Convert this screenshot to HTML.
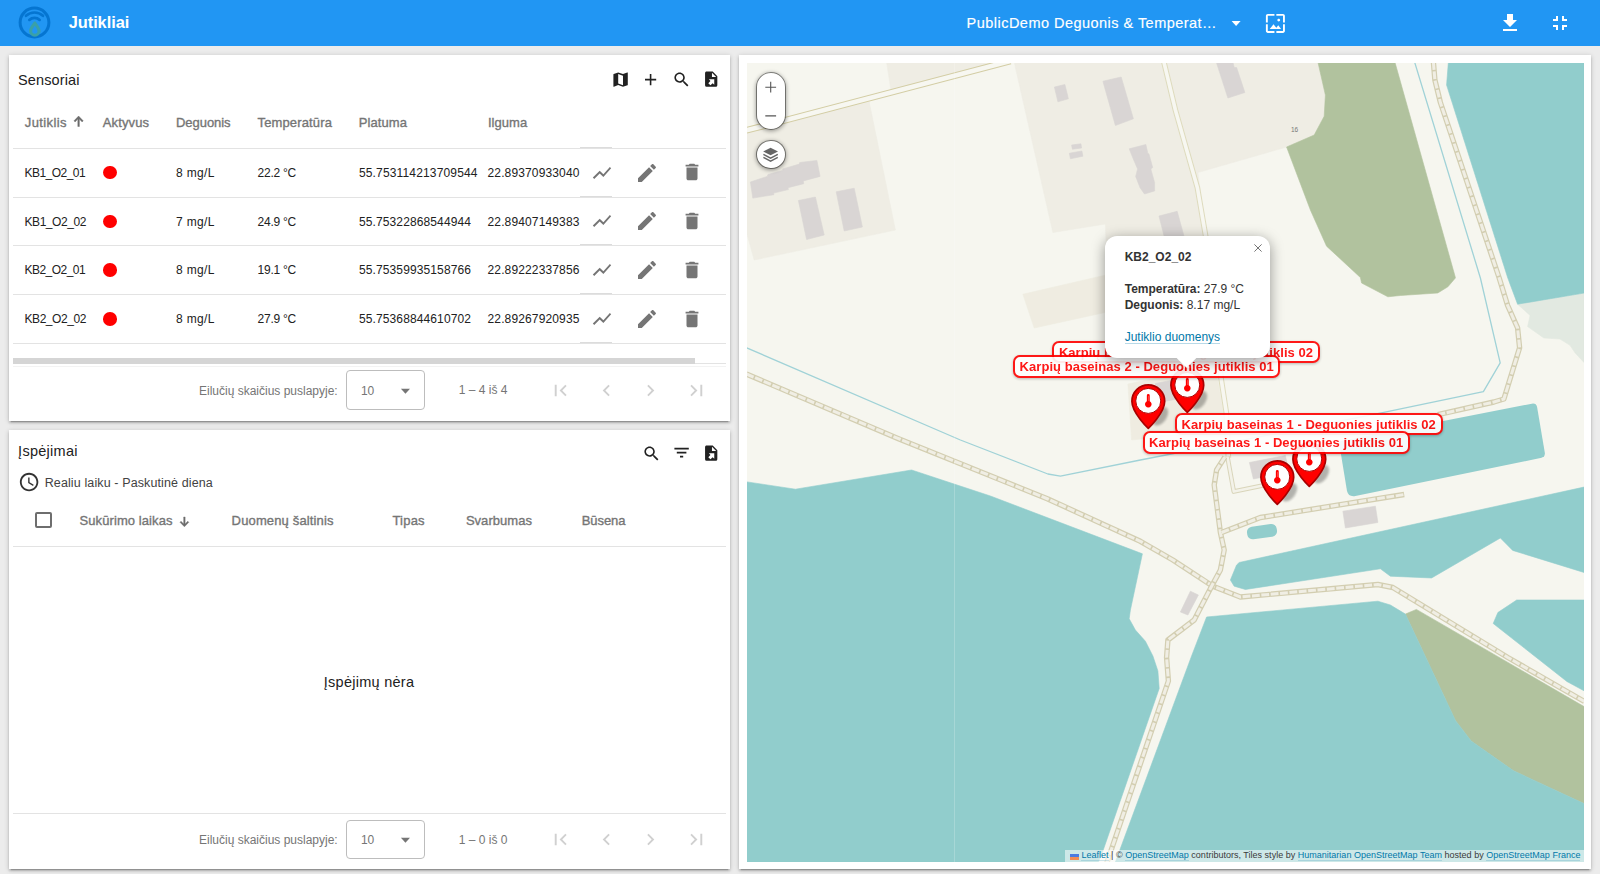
<!DOCTYPE html>
<html lang="lt"><head><meta charset="utf-8"><title>Jutikliai</title>
<style>
html,body{margin:0;padding:0}
body{width:1600px;height:874px;overflow:hidden;background:#ececec;position:relative;font-family:"Liberation Sans","DejaVu Sans",sans-serif;color:#212121}
.t{position:absolute;white-space:pre;line-height:1;margin:0;padding:0}
.abs{position:absolute}
h1.t,h2.t{font-weight:400}
header,main,section{display:block;margin:0;padding:0}
#hdr{position:absolute;left:0;top:0;width:1600px;height:46px;background:#2196f3}
.card{position:absolute;background:#fff;box-shadow:0 3px 1px -2px rgba(0,0,0,.2),0 2px 2px 0 rgba(0,0,0,.14),0 1px 5px 0 rgba(0,0,0,.2)}
.hl{position:absolute;height:1px;background:#e3e3e3}
.m{-webkit-text-stroke:.35px currentColor}
svg{position:absolute;overflow:visible}
.dot{position:absolute;width:13.6px;height:13.6px;border-radius:50%;background:#ff0000}
.sel{position:absolute;box-sizing:border-box;border:1px solid #bdbdbd;border-radius:4px}
.lbl{position:absolute;box-sizing:border-box;width:267.2px;height:22.4px;border:2px solid #ff0000;border-radius:7px;background:#fff;opacity:.9;box-shadow:0 1px 3px rgba(0,0,0,.28)}
.lbl .t{text-shadow:0 0 2px #fff}
.lk{color:#0078a8;border-bottom:1px solid rgba(0,120,168,.18)}
</style></head><body>

<header id="hdr">
<svg style="left:0;top:0" width="70" height="46" viewBox="0 0 70 46"><g fill="none" stroke="#0575d1" stroke-linecap="round"><circle cx="34.5" cy="22.5" r="14.4" stroke-width="3"/><path d="M26 15.8 A12.6 12.6 0 0 1 43 15.8" stroke-width="2.7"/><path d="M29.3 19.9 A7.6 7.6 0 0 1 39.7 19.9" stroke-width="2.7"/></g><path d="M34.8 23 C33.4 25.4 30.6 28 30.6 31 a4.2 4.2 0 0 0 8.4 0 C39 28 36.2 25.4 34.8 23 Z" fill="none" stroke="#3aa0a8" stroke-width="3.1" stroke-linejoin="round"/></svg>
<h1 class="t" style="left:68.75px;top:14px;font-size:16.4px;letter-spacing:-0.068px;color:#fff;font-weight:700;">Jutikliai</h1>
<span class="t" style="left:966.60px;top:16px;font-size:14.5px;letter-spacing:0.471px;color:#fff;-webkit-text-stroke:.15px #fff;">PublicDemo Deguonis &amp; Temperat…</span>
<svg style="left:0;top:0" width="1600" height="46"><path fill="#fff" d="M1231.6 21h9l-4.5 4.9z"/></svg>
<svg style="left:1264.00px;top:12.20px" width="22.8" height="22.8" viewBox="0 0 24 24"><path fill="#fff" d="M4 4h7V2H4c-1.1 0-2 .9-2 2v7h2V4zm6 9l-4 5h12l-3-4-2.03 2.71L10 13zm7-4.5c0-.83-.67-1.5-1.5-1.5S14 7.67 14 8.5s.67 1.5 1.5 1.5S17 9.33 17 8.5zM20 2h-7v2h7v7h2V4c0-1.1-.9-2-2-2zm0 18h-7v2h7c1.1 0 2-.9 2-2v-7h-2v7zM4 13H2v7c0 1.1.9 2 2 2h7v-2H4v-7z"/></svg>
<svg style="left:1497.50px;top:10.90px" width="24" height="24" viewBox="0 0 24 24"><path fill="#fff" d="M19 9h-4V3H9v6H5l7 7 7-7zM5 18v2h14v-2H5z"/></svg>
<svg style="left:1548.10px;top:11.10px" width="24" height="24" viewBox="0 0 24 24"><path fill="#fff" d="M5 16h3v3h2v-5H5v2zm3-8H5v2h5V5H8v3zm6 11h2v-3h3v-2h-5v5zm2-11V5h-2v5h5V8h-3z"/></svg>
</header>
<main>
<section aria-label="Sensoriai">
<div class="card" style="left:9.2px;top:55.4px;width:720.8px;height:365.8px"></div>
<h2 class="t" style="left:18.10px;top:73px;font-size:14.5px;letter-spacing:0.106px;color:#212121;">Sensoriai</h2>
<svg style="left:611.20px;top:70.10px" width="19.2" height="19.2" viewBox="0 0 24 24"><path fill="#212121" d="M20.5 3l-.16.03L15 5.1 9 3 3.36 4.9c-.21.07-.36.25-.36.48V20.5c0 .28.22.5.5.5l.16-.03L9 18.9l6 2.1 5.64-1.9c.21-.07.36-.25.36-.48V3.5c0-.28-.22-.5-.5-.5zM15 19l-6-2.11V5l6 2.11V19z"/></svg>
<svg style="left:641.10px;top:69.80px" width="19.2" height="19.2" viewBox="0 0 24 24"><path fill="#212121" d="M19 13h-6v6h-2v-6H5v-2h6V5h2v6h6v2z"/></svg>
<svg style="left:671.50px;top:70.10px" width="19.2" height="19.2" viewBox="0 0 24 24"><path fill="#212121" d="M15.5 14h-.79l-.28-.27C15.41 12.59 16 11.11 16 9.5 16 5.91 13.09 3 9.5 3S3 5.91 3 9.5 5.91 16 9.5 16c1.61 0 3.09-.59 4.23-1.57l.27.28v.79l5 4.99L20.49 19l-4.99-5zm-6 0C7.01 14 5 11.99 5 9.5S7.01 5 9.5 5 14 7.01 14 9.5 11.99 14 9.5 14z"/></svg>
<svg style="left:701.80px;top:70.00px" width="18.4" height="18.4" viewBox="0 0 24 24"><path fill="#212121" d="M6,2C4.89,2 4,2.89 4,4V20A2,2 0 0,0 6,22H18A2,2 0 0,0 20,20V8L14,2H6M13,3.5L18.5,9H13V3.5M8.93,12.22H16V19.29L13.88,17.17L11.05,20L8.22,17.17L11.05,14.35L8.93,12.22Z"/></svg>
<span class="t m" style="left:24.75px;top:116px;font-size:13px;letter-spacing:0.391px;color:#757575;">Jutiklis</span>
<span class="t m" style="left:102.75px;top:116px;font-size:13px;letter-spacing:0.122px;color:#757575;">Aktyvus</span>
<span class="t m" style="left:176.00px;top:116px;font-size:13px;letter-spacing:-0.048px;color:#757575;">Deguonis</span>
<span class="t m" style="left:257.50px;top:116px;font-size:13px;letter-spacing:0.142px;color:#757575;">Temperatūra</span>
<span class="t m" style="left:358.75px;top:116px;font-size:13px;letter-spacing:0.074px;color:#757575;">Platuma</span>
<span class="t m" style="left:487.90px;top:116px;font-size:13px;letter-spacing:0.064px;color:#757575;">Ilguma</span>
<svg style="left:73.7px;top:116.3px" width="9.2" height="10.5" viewBox="240 -760 480 520" preserveAspectRatio="none"><path fill="#6c6c6c" stroke="#6c6c6c" stroke-width="22" d="M440-240v-368L296-464l-56-56 240-240 240 240-56 56-144-144v368h-80Z"/></svg>
<div class="hl" style="left:13px;top:147.70px;width:712.6px"></div>
<div class="hl" style="left:580px;top:146.90px;width:32px;background:#dcdcdc"></div>
<div class="hl" style="left:13px;top:196.50px;width:712.6px"></div>
<div class="hl" style="left:580px;top:195.70px;width:32px;background:#dcdcdc"></div>
<div class="hl" style="left:13px;top:245.20px;width:712.6px"></div>
<div class="hl" style="left:580px;top:244.40px;width:32px;background:#dcdcdc"></div>
<div class="hl" style="left:13px;top:294.00px;width:712.6px"></div>
<div class="hl" style="left:580px;top:293.20px;width:32px;background:#dcdcdc"></div>
<div class="hl" style="left:13px;top:342.80px;width:712.6px"></div>
<div class="hl" style="left:580px;top:342.00px;width:32px;background:#dcdcdc"></div>
<span class="t" style="left:24.50px;top:167px;font-size:12px;letter-spacing:-0.536px;color:#212121;">KB1_O2_01</span>
<div class="dot" style="left:103.20px;top:165.90px"></div>
<span class="t" style="left:176.00px;top:167px;font-size:12px;letter-spacing:0.343px;color:#212121;">8 mg/L</span>
<span class="t" style="left:257.50px;top:167px;font-size:12px;letter-spacing:-0.234px;color:#212121;">22.2 °C</span>
<span class="t" style="left:358.90px;top:167px;font-size:12px;letter-spacing:0.158px;color:#212121;">55.753114213709544</span>
<span class="t" style="left:487.50px;top:167px;font-size:12px;letter-spacing:0.139px;color:#212121;">22.89370933040</span>
<svg style="left:590.90px;top:161.50px" width="22" height="22" viewBox="0 0 24 24"><path fill="#757575" d="M3.5 18.49l6-6.01 4 4L22 6.92l-1.41-1.41-7.09 7.97-4-4L2 16.99z"/></svg>
<svg style="left:634.75px;top:160.70px" width="24" height="24" viewBox="0 0 24 24"><path fill="#757575" d="M3 17.25V21h3.75L17.81 9.94l-3.75-3.75L3 17.25zM20.71 7.04c.39-.39.39-1.02 0-1.41l-2.34-2.34c-.39-.39-1.02-.39-1.41 0l-1.83 1.83 3.75 3.75 1.83-1.83z"/></svg>
<svg style="left:680.80px;top:161.40px" width="22" height="22" viewBox="0 0 24 24"><path fill="#757575" d="M6 19c0 1.1.9 2 2 2h8c1.1 0 2-.9 2-2V7H6v12zM19 4h-3.5l-1-1h-5l-1 1H5v2h14V4z"/></svg>
<span class="t" style="left:24.50px;top:216px;font-size:12px;letter-spacing:-0.436px;color:#212121;">KB1_O2_02</span>
<div class="dot" style="left:103.20px;top:214.65px"></div>
<span class="t" style="left:176.00px;top:216px;font-size:12px;letter-spacing:0.343px;color:#212121;">7 mg/L</span>
<span class="t" style="left:257.50px;top:216px;font-size:12px;letter-spacing:-0.234px;color:#212121;">24.9 °C</span>
<span class="t" style="left:358.90px;top:216px;font-size:12px;letter-spacing:0.123px;color:#212121;">55.75322868544944</span>
<span class="t" style="left:487.50px;top:216px;font-size:12px;letter-spacing:0.139px;color:#212121;">22.89407149383</span>
<svg style="left:590.90px;top:210.25px" width="22" height="22" viewBox="0 0 24 24"><path fill="#757575" d="M3.5 18.49l6-6.01 4 4L22 6.92l-1.41-1.41-7.09 7.97-4-4L2 16.99z"/></svg>
<svg style="left:634.75px;top:209.45px" width="24" height="24" viewBox="0 0 24 24"><path fill="#757575" d="M3 17.25V21h3.75L17.81 9.94l-3.75-3.75L3 17.25zM20.71 7.04c.39-.39.39-1.02 0-1.41l-2.34-2.34c-.39-.39-1.02-.39-1.41 0l-1.83 1.83 3.75 3.75 1.83-1.83z"/></svg>
<svg style="left:680.80px;top:210.15px" width="22" height="22" viewBox="0 0 24 24"><path fill="#757575" d="M6 19c0 1.1.9 2 2 2h8c1.1 0 2-.9 2-2V7H6v12zM19 4h-3.5l-1-1h-5l-1 1H5v2h14V4z"/></svg>
<span class="t" style="left:24.50px;top:264px;font-size:12px;letter-spacing:-0.536px;color:#212121;">KB2_O2_01</span>
<div class="dot" style="left:103.20px;top:263.40px"></div>
<span class="t" style="left:176.00px;top:264px;font-size:12px;letter-spacing:0.343px;color:#212121;">8 mg/L</span>
<span class="t" style="left:257.50px;top:264px;font-size:12px;letter-spacing:-0.234px;color:#212121;">19.1 °C</span>
<span class="t" style="left:358.90px;top:264px;font-size:12px;letter-spacing:0.123px;color:#212121;">55.75359935158766</span>
<span class="t" style="left:487.50px;top:264px;font-size:12px;letter-spacing:0.139px;color:#212121;">22.89222337856</span>
<svg style="left:590.90px;top:259.00px" width="22" height="22" viewBox="0 0 24 24"><path fill="#757575" d="M3.5 18.49l6-6.01 4 4L22 6.92l-1.41-1.41-7.09 7.97-4-4L2 16.99z"/></svg>
<svg style="left:634.75px;top:258.20px" width="24" height="24" viewBox="0 0 24 24"><path fill="#757575" d="M3 17.25V21h3.75L17.81 9.94l-3.75-3.75L3 17.25zM20.71 7.04c.39-.39.39-1.02 0-1.41l-2.34-2.34c-.39-.39-1.02-.39-1.41 0l-1.83 1.83 3.75 3.75 1.83-1.83z"/></svg>
<svg style="left:680.80px;top:258.90px" width="22" height="22" viewBox="0 0 24 24"><path fill="#757575" d="M6 19c0 1.1.9 2 2 2h8c1.1 0 2-.9 2-2V7H6v12zM19 4h-3.5l-1-1h-5l-1 1H5v2h14V4z"/></svg>
<span class="t" style="left:24.50px;top:313px;font-size:12px;letter-spacing:-0.436px;color:#212121;">KB2_O2_02</span>
<div class="dot" style="left:103.20px;top:312.15px"></div>
<span class="t" style="left:176.00px;top:313px;font-size:12px;letter-spacing:0.343px;color:#212121;">8 mg/L</span>
<span class="t" style="left:257.50px;top:313px;font-size:12px;letter-spacing:-0.234px;color:#212121;">27.9 °C</span>
<span class="t" style="left:358.90px;top:313px;font-size:12px;letter-spacing:0.123px;color:#212121;">55.75368844610702</span>
<span class="t" style="left:487.50px;top:313px;font-size:12px;letter-spacing:0.139px;color:#212121;">22.89267920935</span>
<svg style="left:590.90px;top:307.75px" width="22" height="22" viewBox="0 0 24 24"><path fill="#757575" d="M3.5 18.49l6-6.01 4 4L22 6.92l-1.41-1.41-7.09 7.97-4-4L2 16.99z"/></svg>
<svg style="left:634.75px;top:306.95px" width="24" height="24" viewBox="0 0 24 24"><path fill="#757575" d="M3 17.25V21h3.75L17.81 9.94l-3.75-3.75L3 17.25zM20.71 7.04c.39-.39.39-1.02 0-1.41l-2.34-2.34c-.39-.39-1.02-.39-1.41 0l-1.83 1.83 3.75 3.75 1.83-1.83z"/></svg>
<svg style="left:680.80px;top:307.65px" width="22" height="22" viewBox="0 0 24 24"><path fill="#757575" d="M6 19c0 1.1.9 2 2 2h8c1.1 0 2-.9 2-2V7H6v12zM19 4h-3.5l-1-1h-5l-1 1H5v2h14V4z"/></svg>
<div class="abs" style="left:13px;top:358px;width:682px;height:6px;background:#d5d5d5"></div>
<div class="hl" style="left:695px;top:363.4px;width:31px"></div>
<div class="hl" style="left:13px;top:366px;width:713px;background:#f3f3f3"></div>
<span class="t" style="left:199.00px;top:385px;font-size:12px;letter-spacing:-0.001px;color:#757575;">Eilučių skaičius puslapyje:</span>
<div class="sel" style="left:345.8px;top:370.4px;width:78.9px;height:39.2px"></div>
<span class="t" style="left:360.90px;top:385px;font-size:12px;color:#757575;">10</span>
<svg style="left:400px;top:385.00px" width="12" height="10"><path fill="#757575" d="M.9 3.7h9.1l-4.55 5z"/></svg>
<span class="t" style="left:458.75px;top:384px;font-size:12px;letter-spacing:0.005px;color:#757575;">1 – 4 iš 4</span>
<svg style="left:549.40px;top:378.90px" width="23" height="23" viewBox="0 0 24 24"><path fill="#d0d0d0" d="M18.41 16.59L13.82 12l4.59-4.59L17 6l-6 6 6 6zM6 6h2v12H6z"/></svg>
<svg style="left:594.50px;top:378.90px" width="23" height="23" viewBox="0 0 24 24"><path fill="#d0d0d0" d="M15.41 7.41L14 6l-6 6 6 6 1.41-1.41L10.83 12z"/></svg>
<svg style="left:639.00px;top:378.90px" width="23" height="23" viewBox="0 0 24 24"><path fill="#d0d0d0" d="M10 6L8.59 7.41 13.17 12l-4.58 4.59L10 18l6-6z"/></svg>
<svg style="left:684.90px;top:378.90px" width="23" height="23" viewBox="0 0 24 24"><path fill="#d0d0d0" d="M5.59 7.41L10.18 12l-4.59 4.59L7 18l6-6-6-6zM16 6h2v12h-2z"/></svg>
</section>
<section aria-label="Įspėjimai">
<div class="card" style="left:9.2px;top:429.7px;width:720.8px;height:439.6px"></div>
<h2 class="t" style="left:18.10px;top:444px;font-size:14.5px;letter-spacing:0.273px;color:#212121;">Įspėjimai</h2>
<svg style="left:641.80px;top:443.80px" width="19.2" height="19.2" viewBox="0 0 24 24"><path fill="#212121" d="M15.5 14h-.79l-.28-.27C15.41 12.59 16 11.11 16 9.5 16 5.91 13.09 3 9.5 3S3 5.91 3 9.5 5.91 16 9.5 16c1.61 0 3.09-.59 4.23-1.57l.27.28v.79l5 4.99L20.49 19l-4.99-5zm-6 0C7.01 14 5 11.99 5 9.5S7.01 5 9.5 5 14 7.01 14 9.5 11.99 14 9.5 14z"/></svg>
<svg style="left:671.60px;top:443.40px" width="19.2" height="19.2" viewBox="0 0 24 24"><path fill="#212121" d="M10 18h4v-2h-4v2zM3 6v2h18V6H3zm3 7h12v-2H6v2z"/></svg>
<svg style="left:701.80px;top:444.00px" width="18.4" height="18.4" viewBox="0 0 24 24"><path fill="#212121" d="M6,2C4.89,2 4,2.89 4,4V20A2,2 0 0,0 6,22H18A2,2 0 0,0 20,20V8L14,2H6M13,3.5L18.5,9H13V3.5M8.93,12.22H16V19.29L13.88,17.17L11.05,20L8.22,17.17L11.05,14.35L8.93,12.22Z"/></svg>
<svg style="left:17.85px;top:471.45px" width="22.2" height="22.2" viewBox="0 0 24 24"><path fill="#333" d="M11.99 2C6.47 2 2 6.48 2 12s4.47 10 9.99 10C17.52 22 22 17.52 22 12S17.52 2 11.99 2zM12 20c-4.42 0-8-3.58-8-8s3.58-8 8-8 8 3.58 8 8-3.58 8-8 8zm.5-13H11v6l5.25 3.15.75-1.23-4.5-2.67z"/></svg>
<span class="t" style="left:44.70px;top:477px;font-size:12.5px;letter-spacing:0.118px;color:#424242;">Realiu laiku - Paskutinė diena</span>
<div class="abs" style="left:35.3px;top:512.3px;width:16.6px;height:16.1px;box-sizing:border-box;border:2px solid #6e6e6e;border-radius:2px"></div>
<span class="t m" style="left:79.50px;top:514px;font-size:13px;letter-spacing:0.088px;color:#757575;">Sukūrimo laikas</span>
<span class="t m" style="left:231.60px;top:514px;font-size:13px;letter-spacing:0.145px;color:#757575;">Duomenų šaltinis</span>
<span class="t m" style="left:392.40px;top:514px;font-size:13px;letter-spacing:0.222px;color:#757575;">Tipas</span>
<span class="t m" style="left:465.90px;top:514px;font-size:13px;letter-spacing:0.031px;color:#757575;">Svarbumas</span>
<span class="t m" style="left:581.80px;top:514px;font-size:13px;letter-spacing:-0.099px;color:#757575;">Būsena</span>
<svg style="left:180.2px;top:516.6px" width="8.8" height="9.8" viewBox="240 -760 480 520" preserveAspectRatio="none"><path fill="#6c6c6c" stroke="#6c6c6c" stroke-width="22" transform="rotate(180 480 -500)" d="M440-240v-368L296-464l-56-56 240-240 240 240-56 56-144-144v368h-80Z"/></svg>
<div class="hl" style="left:13px;top:545.9px;width:712.6px"></div>
<span class="t" style="left:323.80px;top:675px;font-size:14.5px;letter-spacing:0.263px;color:#212121;">Įspėjimų nėra</span>
<div class="hl" style="left:13px;top:812.5px;width:712.6px"></div>
<span class="t" style="left:199.00px;top:834px;font-size:12px;letter-spacing:-0.001px;color:#757575;">Eilučių skaičius puslapyje:</span>
<div class="sel" style="left:345.8px;top:820.1px;width:78.9px;height:38.6px"></div>
<span class="t" style="left:360.90px;top:834px;font-size:12px;color:#757575;">10</span>
<svg style="left:400px;top:834.40px" width="12" height="10"><path fill="#757575" d="M.9 3.7h9.1l-4.55 5z"/></svg>
<span class="t" style="left:458.75px;top:834px;font-size:12px;letter-spacing:0.005px;color:#757575;">1 – 0 iš 0</span>
<svg style="left:549.40px;top:828.30px" width="23" height="23" viewBox="0 0 24 24"><path fill="#d0d0d0" d="M18.41 16.59L13.82 12l4.59-4.59L17 6l-6 6 6 6zM6 6h2v12H6z"/></svg>
<svg style="left:594.50px;top:828.30px" width="23" height="23" viewBox="0 0 24 24"><path fill="#d0d0d0" d="M15.41 7.41L14 6l-6 6 6 6 1.41-1.41L10.83 12z"/></svg>
<svg style="left:639.00px;top:828.30px" width="23" height="23" viewBox="0 0 24 24"><path fill="#d0d0d0" d="M10 6L8.59 7.41 13.17 12l-4.58 4.59L10 18l6-6z"/></svg>
<svg style="left:684.90px;top:828.30px" width="23" height="23" viewBox="0 0 24 24"><path fill="#d0d0d0" d="M5.59 7.41L10.18 12l-4.59 4.59L7 18l6-6-6-6zM16 6h2v12h-2z"/></svg>
</section>
<section aria-label="Žemėlapis">
<div class="card" style="left:738.9px;top:55.4px;width:852.6px;height:813.9px"></div>
<div id="map" style="position:absolute;left:746.6px;top:63px;width:837.2px;height:798.8px;overflow:hidden;background:#f6f6ef">
<svg style="left:0;top:0" width="837.2" height="798.8" viewBox="746.6 63 837.2 798.8"><polygon fill="#efede4" stroke="#efede4" stroke-width=".6" points="746.0,133.0 868.8,102.0 895.0,230.0 753.8,260.0 746.0,232.0"/>
<polygon fill="#efede4" stroke="#efede4" stroke-width=".6" points="886.2,62.0 996.0,62.0 890.5,89.8"/>
<polygon fill="#efede4" stroke="#efede4" stroke-width=".6" points="1013.8,62.0 1317.5,62.0 1325.0,95.0 1323.8,116.2 1313.8,135.0 1286.2,147.0 1197.5,172.5 1205.0,235.0 1215.0,300.0 1108.0,300.0 1105.0,224.0 1052.5,232.5"/>
<polygon fill="#efece1" stroke="#efece1" stroke-width=".6" points="1022.5,294.2 1110.0,274.0 1125.0,308.0 1033.8,328.0"/>
<polygon fill="#efece1" stroke="#efece1" stroke-width=".6" points="1127.5,384.0 1215.0,366.0 1226.0,430.0 1131.2,440.0"/>
<polygon fill="#b1c29e" stroke="#b1c29e" stroke-width=".6" points="1317.5,62.0 1394.5,62.0 1455.0,277.5 1455.0,278.0 1447.5,286.8 1437.4,293.0 1400.0,295.5 1387.5,296.8 1361.2,283.0 1360.0,277.5 1326.2,246.2 1310.0,210.0 1286.2,147.0 1313.8,135.0 1323.8,116.2 1325.0,95.0"/>
<polygon fill="#b1c29e" stroke="#b1c29e" stroke-width=".6" points="1405.0,614.1 1416.0,609.4 1584.0,706.8 1584.0,803.8 1513.2,770.8 1470.8,741.0 1455.2,720.7"/>
<polygon fill="#e2e9e1" stroke="#e2e9e1" stroke-width=".6" points="1517.2,304.2 1584.0,293.0 1584.0,362.8 1574.6,352.8 1569.6,345.3 1559.6,339.1 1543.4,337.9 1527.2,326.6 1529.7,315.4"/>
<polygon fill="#91cdcc" stroke="#91cdcc" stroke-width=".6" points="1448.0,62.0 1584.0,62.0 1584.0,293.0 1517.2,304.2 1507.4,278.0 1446.2,85.0"/>
<polygon fill="#91cdcc" stroke="#91cdcc" stroke-width=".6" points="746.0,481.8 795.0,489.2 911.2,470.0 990.0,496.0 1142.0,553.8 1130.0,610.0 1128.8,618.8 1135.0,630.0 1145.0,641.2 1152.5,656.0 1157.5,671.0 1158.8,688.5 1102.5,851.0 1098.0,862.0 746.0,862.0"/>
<path fill="#91cdcc" d="M1338.5 441.5 L1531.5 403.7 Q1535.8 403 1536.7 407 L1544.4 452.5 Q1545 456.8 1541.2 457.8 L1355 496 Q1348 497.2 1346.6 491 Z"/>
<polygon fill="#91cdcc" stroke="#91cdcc" stroke-width=".6" points="1584.0,487.0 1238.8,562.5 1236.2,565.0 1230.0,580.0 1233.8,586.2 1245.0,589.5 1380.0,568.8 1390.0,576.2 1431.2,578.0 1500.0,538.0 1512.3,550.4 1584.0,572.6"/>
<polygon fill="#91cdcc" stroke="#91cdcc" stroke-width=".6" points="1206.2,617.0 1377.5,601.2 1390.0,605.0 1405.0,614.1 1455.2,720.7 1470.8,741.0 1513.2,770.8 1584.0,803.8 1584.0,862.0 1115.0,862.0 1191.2,656.0"/>
<polygon fill="#91cdcc" stroke="#91cdcc" stroke-width=".6" points="1584.0,600.0 1516.3,600.0 1497.5,612.5 1492.8,623.5 1566.5,681.5 1584.0,691.0"/>
<rect x="1246.6" y="525.2" width="30" height="12.8" rx="5.5" fill="#91cdcc" transform="rotate(-8 1262 531.5)"/>
<polygon fill="#d9d5d4" stroke="#d9d5d4" stroke-width=".6" points="750.0,182.0 766.8,176.4 767.6,174.5 782.0,170.5 782.5,168.9 798.9,164.1 799.3,162.5 816.5,160.4 819.7,176.4 802.9,180.9 803.3,183.7 787.6,187.7 788.0,189.6 773.2,193.1 773.5,194.7 752.4,198.1"/>
<polygon fill="#d9d5d4" stroke="#d9d5d4" stroke-width=".6" points="798.0,200.5 815.0,197.0 823.8,235.0 806.2,239.5"/>
<polygon fill="#d9d5d4" stroke="#d9d5d4" stroke-width=".6" points="835.8,191.8 853.8,188.2 862.0,227.0 843.8,231.0"/>
<polygon fill="#d9d5d4" stroke="#d9d5d4" stroke-width=".6" points="1054.0,87.0 1064.5,84.5 1068.0,98.8 1057.5,101.8"/>
<polygon fill="#d9d5d4" stroke="#d9d5d4" stroke-width=".6" points="1102.5,81.2 1120.8,77.0 1133.0,118.8 1115.0,125.5"/>
<polygon fill="#d9d5d4" stroke="#d9d5d4" stroke-width=".6" points="1071.2,145.0 1080.5,143.8 1081.2,148.0 1072.0,149.2"/>
<polygon fill="#d9d5d4" stroke="#d9d5d4" stroke-width=".6" points="1069.0,153.2 1081.5,151.0 1082.5,156.2 1070.0,158.8"/>
<polygon fill="#d9d5d4" stroke="#d9d5d4" stroke-width=".6" points="1128.8,148.8 1145.5,144.5 1147.5,153.8 1148.5,153.8 1152.3,167.6 1150.4,168.9 1154.2,182.7 1154.2,190.9 1144.1,194.0 1139.7,187.8 1135.3,176.4 1137.2,168.9 1132.8,158.8"/>
<polygon fill="#d9d5d4" stroke="#d9d5d4" stroke-width=".6" points="1216.2,62.0 1232.5,62.0 1233.8,67.5 1236.2,67.5 1244.5,92.5 1227.5,98.0 1216.2,63.0"/>
<polygon fill="#d9d5d4" stroke="#d9d5d4" stroke-width=".6" points="1158.6,216.0 1176.8,211.3 1186.0,245.0 1166.0,245.0"/>
<polygon fill="#d9d5d4" stroke="#d9d5d4" stroke-width=".6" points="1342.5,511.2 1375.0,506.2 1377.5,522.5 1345.0,528.0"/>
<polygon fill="#d9d5d4" stroke="#d9d5d4" stroke-width=".6" points="1249.0,462.5 1285.0,455.5 1288.5,472.0 1253.0,479.0"/>
<polygon fill="#d9d5d4" stroke="#d9d5d4" stroke-width=".6" points="1190.0,591.2 1198.0,595.0 1187.5,615.0 1180.0,612.0"/>
<polygon fill="#d9d5d4" stroke="#d9d5d4" stroke-width=".6" points="1155.0,383.5 1178.0,379.0 1182.0,398.0 1159.0,402.5"/>
<path d="M1414.2 62.0 L1480.0 278.0 L1499.8 362.8 L1483.0 391.6 L1375.0 414.2 L1140.0 460.0 L1060.0 476.2 L1047.5 474.0 L960.0 440.0 L746.0 347.7" fill="none" stroke="#a0d2d7" stroke-width="1.3" stroke-linejoin="round"/>
<path d="M746.0 130.4 L1010.0 61.0" fill="none" stroke="#d3cda4" stroke-width="6.6" stroke-linejoin="round"/><path d="M746.0 130.4 L1010.0 61.0" fill="none" stroke="#f7f7f1" stroke-width="4.6" stroke-linejoin="round"/>
<path d="M1163.5 62.0 L1175.0 110.0 L1186.3 150.0 L1197.0 187.8 L1205.2 235.6 L1213.0 300.0 L1220.6 377.8 L1226.0 413.0 L1228.0 458.0" fill="none" stroke="#dedbbd" stroke-width="5.6" stroke-linejoin="round"/><path d="M1163.5 62.0 L1175.0 110.0 L1186.3 150.0 L1197.0 187.8 L1205.2 235.6 L1213.0 300.0 L1220.6 377.8 L1226.0 413.0 L1228.0 458.0" fill="none" stroke="#f7f7f1" stroke-width="3.5999999999999996" stroke-linejoin="round"/>
<path d="M1227.0 456.5 L1233.4 491.6 L1262.5 485.4" fill="none" stroke="#d9d5ba" stroke-width="4.6" stroke-linejoin="round"/><path d="M1227.0 456.5 L1233.4 491.6 L1262.5 485.4" fill="none" stroke="#f3f2e9" stroke-width="2.5999999999999996" stroke-linejoin="round"/>
<path d="M1433.0 62.0 L1434.5 80.0 L1440.0 102.5 L1498.8 278.0 L1507.2 305.4 L1517.2 327.9 L1519.2 347.8 L1503.5 399.0 L1493.5 402.0 L1437.4 414.7" fill="none" stroke="#d3ceb1" stroke-width="5.4" stroke-linejoin="round"/><path d="M1433.0 62.0 L1434.5 80.0 L1440.0 102.5 L1498.8 278.0 L1507.2 305.4 L1517.2 327.9 L1519.2 347.8 L1503.5 399.0 L1493.5 402.0 L1437.4 414.7" fill="none" stroke="#f0eee4" stroke-width="3.0" stroke-dasharray="7.8 1.6" stroke-linejoin="round"/>
<path d="M746.0 374.0 L897.5 438.4 L1047.5 499.0 L1140.0 541.3 L1172.5 560.0 L1212.5 586.2 L1240.0 597.0 L1377.5 584.5 L1392.5 587.5 L1507.5 657.5 L1584.0 701.5" fill="none" stroke="#d3ceb1" stroke-width="5.4" stroke-linejoin="round"/><path d="M746.0 374.0 L897.5 438.4 L1047.5 499.0 L1140.0 541.3 L1172.5 560.0 L1212.5 586.2 L1240.0 597.0 L1377.5 584.5 L1392.5 587.5 L1507.5 657.5 L1584.0 701.5" fill="none" stroke="#f0eee4" stroke-width="3.0" stroke-dasharray="7.8 1.6" stroke-linejoin="round"/>
<path d="M1224.5 457.0 L1216.2 470.0 L1213.8 485.0 L1220.0 532.5 L1223.8 550.0 L1220.0 570.0 L1211.2 586.2 L1193.8 620.0 L1167.5 640.0 L1166.2 657.5 L1168.0 681.0 L1108.8 856.0 L1106.0 864.0" fill="none" stroke="#d3ceb1" stroke-width="5.4" stroke-linejoin="round"/><path d="M1224.5 457.0 L1216.2 470.0 L1213.8 485.0 L1220.0 532.5 L1223.8 550.0 L1220.0 570.0 L1211.2 586.2 L1193.8 620.0 L1167.5 640.0 L1166.2 657.5 L1168.0 681.0 L1108.8 856.0 L1106.0 864.0" fill="none" stroke="#f0eee4" stroke-width="3.0" stroke-dasharray="7.8 1.6" stroke-linejoin="round"/>
<path d="M1221.2 532.5 L1260.0 517.5 L1403.8 494.5" fill="none" stroke="#d3ceb1" stroke-width="5.4" stroke-linejoin="round"/><path d="M1221.2 532.5 L1260.0 517.5 L1403.8 494.5" fill="none" stroke="#f0eee4" stroke-width="3.0" stroke-dasharray="7.8 1.6" stroke-linejoin="round"/>
<rect x="953.6" y="62" width="1" height="800" fill="#ffffff" opacity=".2"/></svg>
<span class="t" style="left:544.40px;top:64px;font-size:6.5px;color:#777;">16</span>
<div class="abs" style="left:9.5px;top:9.2px;width:29.9px;height:57.9px;border-radius:15px;box-sizing:border-box;border:1px solid rgba(0,0,0,.4);background:#fff;background-clip:padding-box;box-shadow:0 1px 4px rgba(0,0,0,.4)"></div>
<svg style="left:9.5px;top:9.2px" width="29.3" height="57.6"><path d="M9.3 15.2h10.8M14.7 9.8v10.8M9.3 43.9h10.8" stroke="#555" stroke-width="1.1" fill="none"/></svg>
<div class="abs" style="left:9.5px;top:76.5px;width:29.9px;height:29.9px;border-radius:50%;box-sizing:border-box;border:1px solid rgba(0,0,0,.4);background:#fff;background-clip:padding-box;box-shadow:0 1px 4px rgba(0,0,0,.4)"></div>
<svg style="left:9.5px;top:76.5px" width="29.3" height="29.3"><path d="M14.6 7.7 L22 11.5 L14.6 15.3 L7.2 11.5 Z" fill="#666"/><path d="M7.4 14.4 L14.6 18.1 L21.8 14.4 M7.4 17.4 L14.6 21.1 L21.8 17.4" stroke="#666" stroke-width="1.4" fill="none"/></svg>
<svg style="left:423.3px;top:305.4px" width="48" height="48" viewBox="0 0 48 48"><defs><filter id="blur" x="-50%" y="-50%" width="200%" height="200%"><feGaussianBlur stdDeviation="1.25"/></filter></defs><ellipse cx="29.3" cy="32.2" rx="6.3" ry="10.5" transform="rotate(34 29.3 32.2)" fill="#000" opacity=".27" filter="url(#blur)"/><path d="M17.3 44.4 C17.3 44.4 0.9 29 0.9 17.3 A16.4 16.4 0 0 1 33.7 17.3 C33.7 29 17.3 44.4 17.3 44.4 Z" fill="#ff0000" stroke="#a80000" stroke-width="1.7" stroke-linejoin="round"/><circle cx="17.25" cy="16.9" r="12.5" fill="#fff" stroke="#b00000" stroke-width="1"/><path d="M15.85 11.5 a1.45 1.45 0 0 1 2.9 0 v5.8 a3.3 3.3 0 1 1 -2.9 0 Z" fill="#ff0000"/><path d="M17.3 12 v5" stroke="#fff" stroke-width=".6" opacity=".5"/></svg>
<svg style="left:384.5px;top:320.8px" width="48" height="48" viewBox="0 0 48 48"><defs><filter id="blur" x="-50%" y="-50%" width="200%" height="200%"><feGaussianBlur stdDeviation="1.25"/></filter></defs><ellipse cx="29.3" cy="32.2" rx="6.3" ry="10.5" transform="rotate(34 29.3 32.2)" fill="#000" opacity=".27" filter="url(#blur)"/><path d="M17.3 44.4 C17.3 44.4 0.9 29 0.9 17.3 A16.4 16.4 0 0 1 33.7 17.3 C33.7 29 17.3 44.4 17.3 44.4 Z" fill="#ff0000" stroke="#a80000" stroke-width="1.7" stroke-linejoin="round"/><circle cx="17.25" cy="16.9" r="12.5" fill="#fff" stroke="#b00000" stroke-width="1"/><path d="M15.85 11.5 a1.45 1.45 0 0 1 2.9 0 v5.8 a3.3 3.3 0 1 1 -2.9 0 Z" fill="#ff0000"/><path d="M17.3 12 v5" stroke="#fff" stroke-width=".6" opacity=".5"/></svg>
<svg style="left:545.6px;top:378.6px" width="48" height="48" viewBox="0 0 48 48"><defs><filter id="blur" x="-50%" y="-50%" width="200%" height="200%"><feGaussianBlur stdDeviation="1.25"/></filter></defs><ellipse cx="29.3" cy="32.2" rx="6.3" ry="10.5" transform="rotate(34 29.3 32.2)" fill="#000" opacity=".27" filter="url(#blur)"/><path d="M17.3 44.4 C17.3 44.4 0.9 29 0.9 17.3 A16.4 16.4 0 0 1 33.7 17.3 C33.7 29 17.3 44.4 17.3 44.4 Z" fill="#ff0000" stroke="#a80000" stroke-width="1.7" stroke-linejoin="round"/><circle cx="17.25" cy="16.9" r="12.5" fill="#fff" stroke="#b00000" stroke-width="1"/><path d="M15.85 11.5 a1.45 1.45 0 0 1 2.9 0 v5.8 a3.3 3.3 0 1 1 -2.9 0 Z" fill="#ff0000"/><path d="M17.3 12 v5" stroke="#fff" stroke-width=".6" opacity=".5"/></svg>
<svg style="left:513.3px;top:396.7px" width="48" height="48" viewBox="0 0 48 48"><defs><filter id="blur" x="-50%" y="-50%" width="200%" height="200%"><feGaussianBlur stdDeviation="1.25"/></filter></defs><ellipse cx="29.3" cy="32.2" rx="6.3" ry="10.5" transform="rotate(34 29.3 32.2)" fill="#000" opacity=".27" filter="url(#blur)"/><path d="M17.3 44.4 C17.3 44.4 0.9 29 0.9 17.3 A16.4 16.4 0 0 1 33.7 17.3 C33.7 29 17.3 44.4 17.3 44.4 Z" fill="#ff0000" stroke="#a80000" stroke-width="1.7" stroke-linejoin="round"/><circle cx="17.25" cy="16.9" r="12.5" fill="#fff" stroke="#b00000" stroke-width="1"/><path d="M15.85 11.5 a1.45 1.45 0 0 1 2.9 0 v5.8 a3.3 3.3 0 1 1 -2.9 0 Z" fill="#ff0000"/><path d="M17.3 12 v5" stroke="#fff" stroke-width=".6" opacity=".5"/></svg>
<div class="lbl" style="left:305.90px;top:277.90px"><span class="t" style="left:4.40px;top:3px;font-size:13px;letter-spacing:0.051px;color:#ff0000;font-weight:700;">Karpių baseinas 2 - Deguonies jutiklis 02</span></div>
<div class="lbl" style="left:266.40px;top:292.20px"><span class="t" style="left:4.60px;top:3px;font-size:13px;letter-spacing:0.051px;color:#ff0000;font-weight:700;">Karpių baseinas 2 - Deguonies jutiklis 01</span></div>
<div class="lbl" style="left:428.80px;top:350.10px"><span class="t" style="left:4.20px;top:3px;font-size:13px;letter-spacing:0.051px;color:#ff0000;font-weight:700;">Karpių baseinas 1 - Deguonies jutiklis 02</span></div>
<div class="lbl" style="left:396.30px;top:368.20px"><span class="t" style="left:4.20px;top:3px;font-size:13px;letter-spacing:0.051px;color:#ff0000;font-weight:700;">Karpių baseinas 1 - Deguonies jutiklis 01</span></div>
<div class="abs" style="left:358.3px;top:173.0px;width:164.8px;height:121.6px;border-radius:12px;background:#fff;box-shadow:0 3px 14px rgba(0,0,0,.4)"></div>
<svg style="left:423.4px;top:294.3px" width="34" height="14"><path d="M5.6 0 H27.4 L16.5 10.8 Z" fill="#fff"/></svg>
<span class="t" style="left:378.10px;top:188px;font-size:12px;color:#333;font-weight:700;">KB2_O2_02</span>
<span class="t" style="left:378.10px;top:220px;font-size:12px;color:#333"><b>Temperatūra:</b> 27.9 °C</span>
<span class="t" style="left:378.10px;top:236px;font-size:12px;color:#333"><b>Deguonis:</b> 8.17 mg/L</span>
<span class="t" style="left:378.10px;top:268px;font-size:12px;color:#0078a8;border-bottom:1px solid rgba(0,120,168,.28);padding-bottom:0;line-height:1.0">Jutiklio duomenys</span>
<svg style="left:507.7px;top:180.8px" width="8" height="8"><path d="M.4 .4 L7.6 7.6 M7.6 .4 L.4 7.6" stroke="#757575" stroke-width="1" fill="none"/></svg>
<div class="abs" style="left:318.4px;top:786.8px;width:518.8px;height:12px;background:rgba(255,255,255,.55)"></div>
<svg style="left:323.4px;top:790.6px" width="9" height="6" viewBox="0 0 12 8"><path fill="#4C7BE1" d="M0 0h12v4H0z"/><path fill="#f28c55" d="M0 4h12v4H0z"/></svg>
<span class="t" style="left:334.9px;top:788px;font-size:9px;color:#3a3a3a;letter-spacing:.012px"><span class="lk">Leaflet</span> | © <span class="lk">OpenStreetMap</span> contributors, Tiles style by <span class="lk">Humanitarian OpenStreetMap Team</span> hosted by <span class="lk">OpenStreetMap France</span></span>
</div>
</section>
</main>
</body></html>
